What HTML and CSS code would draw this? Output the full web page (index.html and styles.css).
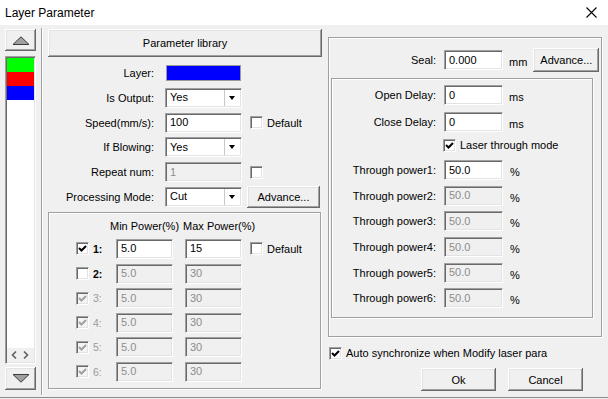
FILE: index.html
```html
<!DOCTYPE html>
<html lang="en">
<head>
    <meta charset="UTF-8">
    <title>Layer Parameter</title>
    <link rel="stylesheet" href="styles.css">
</head>
<body>
    <div class="window">
        <div class="titlebar">
            <span class="title">Layer Parameter</span>
            <svg class="close" width="11" height="11" viewBox="0 0 11 11"><path d="M0.5 0.5L10.5 10.5M10.5 0.5L0.5 10.5" stroke="#000" stroke-width="1.1" fill="none"/></svg>
        </div>

        <div class="dialog">
            <!-- layer strip -->
            <div class="layers">
                <button class="btn arrow-btn">
                    <svg width="18" height="9" viewBox="0 0 18 9"><polygon points="1,8.5 9,0.8 17,8.5" fill="#a0a0a0" stroke="#3c3c3c"/></svg>
                </button>
                <div class="layer-list">
                    <div class="layer-item green"></div>
                    <div class="layer-item red"></div>
                    <div class="layer-item blue"></div>
                    <div class="list-fill"></div>
                    <div class="hscroll">
                        <svg width="6" height="8" viewBox="0 0 6 8"><path d="M5 0.5L1.5 4L5 7.5" stroke="#606060" stroke-width="1.6" fill="none"/></svg>
                        <svg width="6" height="8" viewBox="0 0 6 8"><path d="M1 0.5L4.5 4L1 7.5" stroke="#606060" stroke-width="1.6" fill="none"/></svg>
                    </div>
                </div>
                <button class="btn arrow-btn down">
                    <svg width="18" height="9" viewBox="0 0 18 9"><polygon points="1,0.5 9,8.2 17,0.5" fill="#a0a0a0" stroke="#3c3c3c"/></svg>
                </button>
            </div>

            <div class="vsep"></div>

            <!-- middle column -->
            <div class="middle">
                <button class="btn lib-btn">Parameter library</button>

                <div class="form">
                    <div class="row">
                        <span class="lbl">Layer:</span>
                        <div class="color-box"></div>
                    </div>
                    <div class="row">
                        <span class="lbl">Is Output:</span>
                        <div class="combo"><span class="combo-val">Yes</span><span class="drop"></span></div>
                    </div>
                    <div class="row">
                        <span class="lbl">Speed(mm/s):</span>
                        <input class="field wide" value="100">
                        <span class="check"></span>
                        <span class="check-text">Default</span>
                    </div>
                    <div class="row">
                        <span class="lbl">If Blowing:</span>
                        <div class="combo"><span class="combo-val">Yes</span><span class="drop"></span></div>
                    </div>
                    <div class="row">
                        <span class="lbl">Repeat num:</span>
                        <input class="field wide disabled" value="1" disabled>
                        <span class="check"></span>
                    </div>
                    <div class="row">
                        <span class="lbl">Processing Mode:</span>
                        <div class="combo"><span class="combo-val">Cut</span><span class="drop"></span></div>
                        <button class="btn adv-btn">Advance...</button>
                    </div>
                </div>

                <div class="groupbox power-box">
                    <div class="power-head"><span>Min Power(%)</span><span>Max Power(%)</span></div>
                    <div class="power-rows">
                        <div class="power-row">
                            <span class="check on"><svg width="9" height="9" viewBox="0 0 9 9"><path d="M1 4L3.5 6.5L8 2" stroke="#000" stroke-width="2" fill="none"/></svg></span>
                            <span class="num">1:</span>
                            <input class="field short" value="5.0">
                            <input class="field short" value="15">
                            <span class="check"></span>
                            <span class="check-text">Default</span>
                        </div>
                        <div class="power-row">
                            <span class="check"></span>
                            <span class="num">2:</span>
                            <input class="field short disabled" value="5.0" disabled>
                            <input class="field short disabled" value="30" disabled>
                        </div>
                        <div class="power-row off">
                            <span class="check"><svg width="9" height="9" viewBox="0 0 9 9"><path d="M1 4L3.5 6.5L8 2" stroke="#a0a0a0" stroke-width="2" fill="none"/></svg></span>
                            <span class="num">3:</span>
                            <input class="field short disabled" value="5.0" disabled>
                            <input class="field short disabled" value="30" disabled>
                        </div>
                        <div class="power-row off">
                            <span class="check"><svg width="9" height="9" viewBox="0 0 9 9"><path d="M1 4L3.5 6.5L8 2" stroke="#a0a0a0" stroke-width="2" fill="none"/></svg></span>
                            <span class="num">4:</span>
                            <input class="field short disabled" value="5.0" disabled>
                            <input class="field short disabled" value="30" disabled>
                        </div>
                        <div class="power-row off">
                            <span class="check"><svg width="9" height="9" viewBox="0 0 9 9"><path d="M1 4L3.5 6.5L8 2" stroke="#a0a0a0" stroke-width="2" fill="none"/></svg></span>
                            <span class="num">5:</span>
                            <input class="field short disabled" value="5.0" disabled>
                            <input class="field short disabled" value="30" disabled>
                        </div>
                        <div class="power-row off">
                            <span class="check"><svg width="9" height="9" viewBox="0 0 9 9"><path d="M1 4L3.5 6.5L8 2" stroke="#a0a0a0" stroke-width="2" fill="none"/></svg></span>
                            <span class="num">6:</span>
                            <input class="field short disabled" value="5.0" disabled>
                            <input class="field short disabled" value="30" disabled>
                        </div>
                    </div>
                </div>
            </div>

            <!-- right column -->
            <div class="right">
                <div class="groupbox outer-box">
                    <div class="seal-row">
                        <span class="rlbl">Seal:</span>
                        <input class="field mid" value="0.000">
                        <span class="unit">mm</span>
                        <button class="btn seal-adv">Advance...</button>
                    </div>

                    <div class="groupbox inner-box">
                        <div class="irow">
                            <span class="rlbl">Open Delay:</span>
                            <input class="field mid" value="0">
                            <span class="unit">ms</span>
                        </div>
                        <div class="irow">
                            <span class="rlbl">Close Delay:</span>
                            <input class="field mid" value="0">
                            <span class="unit">ms</span>
                        </div>
                        <div class="laser-row">
                            <span class="check on"><svg width="9" height="9" viewBox="0 0 9 9"><path d="M1 4L3.5 6.5L8 2" stroke="#000" stroke-width="2" fill="none"/></svg></span>
                            <span class="check-text">Laser through mode</span>
                        </div>
                        <div class="through">
                            <div class="irow">
                                <span class="rlbl">Through power1:</span>
                                <input class="field mid" value="50.0">
                                <span class="unit">%</span>
                            </div>
                            <div class="irow">
                                <span class="rlbl">Through power2:</span>
                                <input class="field mid disabled" value="50.0" disabled>
                                <span class="unit">%</span>
                            </div>
                            <div class="irow">
                                <span class="rlbl">Through power3:</span>
                                <input class="field mid disabled" value="50.0" disabled>
                                <span class="unit">%</span>
                            </div>
                            <div class="irow">
                                <span class="rlbl">Through power4:</span>
                                <input class="field mid disabled" value="50.0" disabled>
                                <span class="unit">%</span>
                            </div>
                            <div class="irow">
                                <span class="rlbl">Through power5:</span>
                                <input class="field mid disabled" value="50.0" disabled>
                                <span class="unit">%</span>
                            </div>
                            <div class="irow">
                                <span class="rlbl">Through power6:</span>
                                <input class="field mid disabled" value="50.0" disabled>
                                <span class="unit">%</span>
                            </div>
                        </div>
                    </div>
                </div>

                <div class="sync-row">
                    <span class="check on"><svg width="9" height="9" viewBox="0 0 9 9"><path d="M1 4L3.5 6.5L8 2" stroke="#000" stroke-width="2" fill="none"/></svg></span>
                    <span class="check-text">Auto synchronize when Modify laser para</span>
                </div>

                <div class="actions">
                    <button class="btn act-btn">Ok</button>
                    <button class="btn act-btn">Cancel</button>
                </div>
            </div>
        </div>
    </div>
</body>
</html>
```

FILE: styles.css
```css
* {
    box-sizing: border-box;
}
body {
    margin: 0;
    background: #f0f0f0;
    font-family: "Liberation Sans", Arial, sans-serif;
    font-size: 11px;
    color: #000;
}
.window {
    width: 608px;
    height: 399px;
    background: #f0f0f0;
    overflow: hidden;
}
.titlebar {
    height: 25px;
    background: #fff;
    display: flex;
    align-items: center;
    justify-content: space-between;
    padding: 0 11px 0 5px;
}
.title {
    font-size: 12px;
}
.dialog {
    display: flex;
    height: 373px;
    padding: 4px 0 0 5px;
    border-bottom: 1px solid #8a8a8a;
}

/* buttons */
.btn {
    font-family: inherit;
    font-size: 11px;
    color: #000;
    background: #f0f0f0;
    border: none;
    padding: 0;
    box-shadow: inset -1px -1px #696969, inset 1px 1px #fff, inset -2px -2px #a0a0a0, inset 2px 2px #e3e3e3;
}
.arrow-btn {
    width: 31px;
    height: 22px;
    display: flex;
    align-items: center;
    justify-content: center;
}
.arrow-btn.down {
    height: 23px;
    margin-top: 3px;
}

/* layer strip */
.layers {
    width: 31px;
    display: flex;
    flex-direction: column;
}
.layer-list {
    margin-top: 5px;
    height: 308px;
    background: #fff;
    display: flex;
    flex-direction: column;
    border-top: 1px solid #a0a0a0;
    border-left: 1px solid #a0a0a0;
    border-right: 1px solid #fff;
    border-bottom: 1px solid #fff;
    box-shadow: inset 1px 1px #696969, inset -1px -1px #e3e3e3;
    padding: 1px;
}
.layer-item {
    height: 14px;
}
.green { background: #00ff00; }
.red { background: #ff0000; }
.blue { background: #0000ff; }
.list-fill {
    flex: 1;
}
.hscroll {
    height: 14px;
    background: #f0f0f0;
    display: flex;
    align-items: center;
    justify-content: space-between;
    padding: 0 5px 0 4px;
}
.vsep {
    width: 2px;
    margin: -1px 5px 2px 5px;
    border-left: 1px solid #a0a0a0;
    border-right: 1px solid #fff;
}

/* middle column */
.middle {
    width: 274px;
    display: flex;
    flex-direction: column;
}
.lib-btn {
    height: 28px;
    width: 100%;
}
.form {
    margin-top: 6px;
    display: flex;
    flex-direction: column;
    gap: 4.8px;
}
.row {
    display: flex;
    align-items: center;
    height: 20px;
}
.lbl {
    width: 106px;
    text-align: right;
    margin-right: 11px;
}
.color-box {
    width: 75px;
    height: 16px;
    margin-left: 1px;
    background: #0000ff;
    border: 1px solid #9a9a9a;
}
.field {
    height: 20px;
    font-family: inherit;
    font-size: 11px;
    color: #000;
    background: #fff;
    padding: 0 0 1px 4px;
    outline: none;
    border-top: 1px solid #a0a0a0;
    border-left: 1px solid #a0a0a0;
    border-right: 1px solid #fff;
    border-bottom: 1px solid #fff;
    box-shadow: inset 1px 1px #696969, inset -1px -1px #e3e3e3;
}
.field.disabled {
    background: #f0f0f0;
    color: #8d8d8d;
}
.field.wide {
    width: 77px;
}
.field.short {
    width: 57px;
}
.field.mid {
    width: 59px;
}
.combo {
    width: 77px;
    height: 20px;
    background: #fff;
    display: flex;
    align-items: center;
    border-top: 1px solid #a0a0a0;
    border-left: 1px solid #a0a0a0;
    border-right: 1px solid #fff;
    border-bottom: 1px solid #fff;
    box-shadow: inset 1px 1px #696969, inset -1px -1px #e3e3e3;
}
.combo-val {
    flex: 1;
    padding: 0 0 1px 4px;
}
.drop {
    width: 16px;
    height: 16px;
    margin-right: 1px;
    border-left: 1px solid #c8c8c8;
    position: relative;
}
.drop::after {
    content: "";
    position: absolute;
    left: 4px;
    top: 6px;
    border-left: 3.5px solid transparent;
    border-right: 3.5px solid transparent;
    border-top: 4px solid #000;
}
.check {
    width: 13px;
    height: 13px;
    flex: none;
    background: #fff;
    display: flex;
    align-items: center;
    justify-content: center;
    border-top: 1px solid #a0a0a0;
    border-left: 1px solid #a0a0a0;
    border-right: 1px solid #fff;
    border-bottom: 1px solid #fff;
    box-shadow: inset 1px 1px #696969, inset -1px -1px #e3e3e3;
}
.row .check {
    margin-left: 8px;
}
.check-text {
    margin-left: 4px;
}
.adv-btn {
    width: 73px;
    height: 22px;
    margin-left: 5px;
}

/* power group */
.groupbox {
    border: 1px solid #a0a0a0;
    box-shadow: 1px 1px 0 #fff, inset 1px 1px 0 #fff;
}
.power-box {
    margin-top: 5px;
    width: 273px;
    height: 177px;
    padding-top: 6px;
}
.power-head {
    display: flex;
    gap: 4px;
    padding-left: 61px;
    line-height: 14px;
}
.power-rows {
    margin-top: 6px;
    display: flex;
    flex-direction: column;
    gap: 4.6px;
}
.power-row {
    display: flex;
    align-items: center;
    height: 20px;
    padding-left: 27px;
}
.num {
    width: 27px;
    padding-left: 4px;
    font-weight: bold;
    font-size: 10.5px;
}
.power-row.off .check {
    background: #f4f4f4;
}
.power-row.off .num {
    color: #9a9a9a;
    font-weight: normal;
}
.power-row .field + .field {
    margin-left: 12px;
}
.power-row .field + .check {
    margin-left: 8px;
}

/* right column */
.right {
    width: 274px;
    margin-left: 6px;
    display: flex;
    flex-direction: column;
}
.outer-box {
    margin-top: 8px;
    height: 300px;
    padding: 10px 0 0 2px;
}
.seal-row {
    display: flex;
    align-items: center;
    height: 24px;
}
.rlbl {
    width: 104px;
    text-align: right;
    margin-right: 8px;
}
.seal-row .rlbl {
    width: 105px;
}
.unit {
    margin-left: 6px;
    padding-top: 4px;
}
.seal-adv {
    width: 66px;
    height: 24px;
    margin-left: 6px;
}
.inner-box {
    margin-top: 6px;
    width: 262px;
    height: 240px;
    padding-top: 6px;
}
.irow {
    display: flex;
    align-items: center;
    height: 20px;
}
.inner-box > .irow + .irow {
    margin-top: 7px;
}
.laser-row {
    display: flex;
    align-items: center;
    height: 14px;
    margin-top: 6px;
    padding-left: 111px;
}
.through {
    margin-top: 8px;
    display: flex;
    flex-direction: column;
    gap: 5.7px;
}
.through .unit {
    margin-left: 7px;
}
.sync-row {
    display: flex;
    align-items: center;
    height: 14px;
    margin-top: 9px;
    padding-left: 1px;
}
.actions {
    display: flex;
    justify-content: flex-end;
    gap: 12px;
    margin-top: 8px;
    padding-right: 19px;
}
.act-btn {
    width: 75px;
    height: 23px;
}
```
